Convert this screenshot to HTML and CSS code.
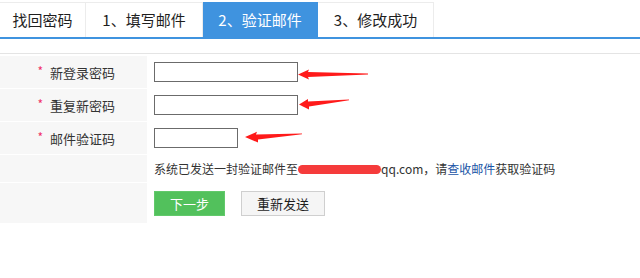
FILE: index.html
```html
<!DOCTYPE html>
<html lang="zh-cn">

<head>
  <meta charset="UTF-8">
  <title>找回密码 - 验证邮件</title>
  <link rel="stylesheet" href="styles.css">
</head>

<body>
  <div class="page">
    <ul class="steps">
      <li class="step-title">找回密码</li>
      <li class="step-2">1、填写邮件</li>
      <li class="step-3 active">2、验证邮件</li>
      <li class="step-4">3、修改成功</li>
    </ul>

    <form class="reset-form">
      <div class="row">
        <label class="lbl" for="newPass"><em>*</em>新登录密码</label>
        <div class="fld"><input id="newPass" type="password"></div>
      </div>
      <div class="row">
        <label class="lbl" for="rePass"><em>*</em>重复新密码</label>
        <div class="fld"><input id="rePass" type="password"></div>
      </div>
      <div class="row">
        <label class="lbl" for="code"><em>*</em>邮件验证码</label>
        <div class="fld"><input id="code" class="short"></div>
      </div>
      <div class="row row-tip">
        <div class="lbl"></div>
        <div class="fld">
          <p class="tip">系统已发送一封验证邮件至<span class="mask"></span>qq.com，请<a href="#">查收邮件</a>获取验证码</p>
        </div>
      </div>
      <div class="row row-btns">
        <div class="lbl"></div>
        <div class="fld">
          <button type="submit" class="btn-next">下一步</button>
          <button type="button" class="btn-resend">重新发送</button>
        </div>
      </div>
    </form>

    <!-- hand drawn arrows over the fields -->
    <svg class="arrows" width="640" height="278" viewBox="0 0 640 278">
      <polygon points="298,74.5 309,69.5 308,72 368,73.6 368,74.4 308,77 309,79.5" />
      <polygon points="299,104.5 308,99 308,101.5 349,99.4 349,100.2 309,106.5 309,109.5" />
      <polygon points="245,137 257,131.8 256,134.5 302,133.5 302,134.3 258,139.5 258,142.5" />
    </svg>
  </div>
</body>

</html>
```

FILE: styles.css
```css
* {
  box-sizing: border-box;
}

body {
  margin: 0;
  font-family: "Noto Sans CJK SC", "Liberation Sans", sans-serif;
  color: #333;
  background: #fff;
}

.page {
  position: relative;
  padding-top: 2px;
  height: 278px;
}

.steps {
  display: flex;
  margin: 0;
  padding: 0;
  list-style: none;
  border-bottom: 2px solid #3f93df;
}

.steps li {
  height: 35px;
  line-height: 34px;
  text-align: center;
  font-size: 15px;
  color: #1e1e1e;
  border-top: 1px solid #ececec;
  border-right: 1px solid #ececec;
}

.step-title {
  width: 86px;
}

.step-2 {
  width: 117px;
}

.step-3 {
  width: 115px;
}

.step-4 {
  width: 116px;
}

.steps li.active {
  background: #3f93df;
  border-color: #3f93df;
  color: #fff;
}

.reset-form {
  margin: 14px 0 0;
  border-top: 1px solid #e4e4e4;
  padding-top: 1px;
}

.row {
  display: flex;
  border-top: 1px solid #fff;
  height: 33px;
}

.row-tip {
  height: 28px;
}

.row-btns {
  height: 41px;
}

.lbl {
  width: 147px;
  flex: none;
  background: #f7f7f7;
  display: flex;
  align-items: center;
  justify-content: flex-end;
  padding-right: 32px;
  font-size: 13px;
  color: #333;
}

.lbl em {
  font-style: normal;
  color: #f0306a;
  font-size: 12px;
  margin-right: 7px;
  position: relative;
  top: -2px;
}

.fld {
  display: flex;
  align-items: center;
  padding-left: 7px;
}

input {
  width: 144px;
  height: 20px;
  border: 1px solid #6b6b6b;
  margin: 0;
  padding: 0 4px;
}

input.short {
  width: 84px;
}

.tip {
  margin: 0;
  font-size: 12px;
  color: #333;
  white-space: nowrap;
}

.tip a {
  color: #1a55a6;
  text-decoration: none;
}

.mask {
  display: inline-block;
  width: 83px;
  height: 9px;
  border-radius: 5px;
  background: #f53b3b;
  vertical-align: middle;
  margin-top: -2px;
}

.fld button {
  height: 25px;
  margin: 0;
  padding: 0;
  font-family: inherit;
  font-size: 13px;
  cursor: pointer;
}

.btn-next {
  width: 71px;
  background: #52c15c;
  border: 1px solid #62c96b;
  color: #fff;
}

.fld .btn-resend {
  width: 84px;
  margin-left: 16px;
  background: #f5f5f5;
  border: 1px solid #cfcfcf;
  color: #1e1e1e;
}

.arrows {
  position: absolute;
  left: 0;
  top: 0;
  pointer-events: none;
}

.arrows polygon {
  fill: #ff1a1a;
}
```
